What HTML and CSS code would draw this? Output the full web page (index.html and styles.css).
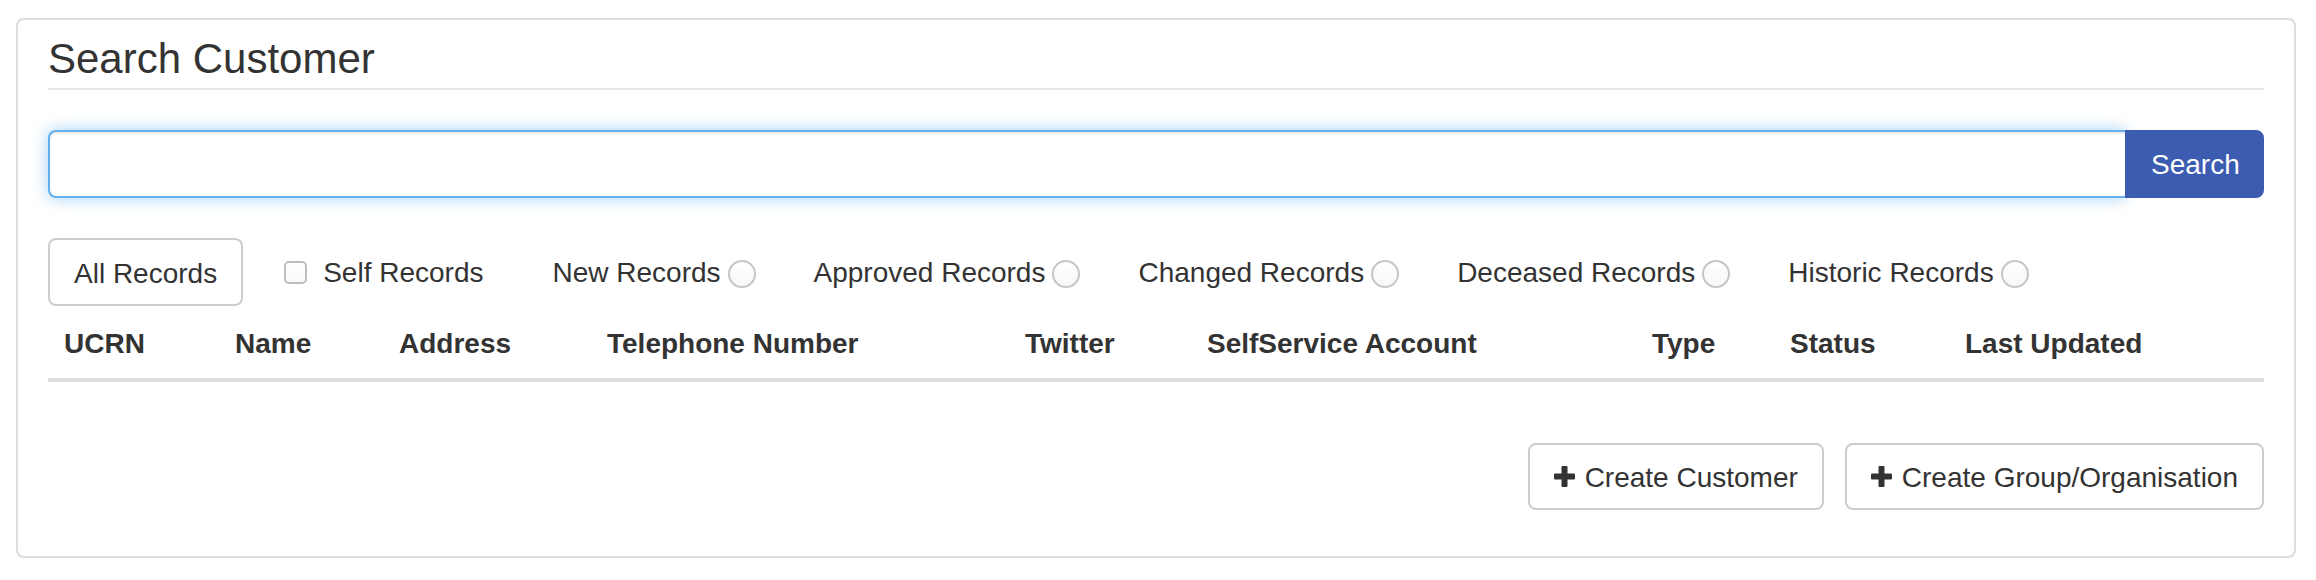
FILE: index.html
```html
<!DOCTYPE html>
<html lang="en">
<head>
<meta charset="utf-8">
<title>Search Customer</title>
<link rel="stylesheet" href="styles.css">
</head>
<body>
<div class="page">
  <section class="panel">
    <h3 class="title">Search Customer</h3>

    <form class="search-row" onsubmit="return false;">
      <input class="search-input" type="text" aria-label="Search">
      <button class="search-btn" type="submit">Search</button>
    </form>

    <div class="filters">
      <button class="btn" type="button">All Records</button>
      <label class="check-item">
        <input class="check" type="checkbox">
        <span class="check-label">Self Records</span>
      </label>
      <label class="radio-item radio-first">
        <span class="lbl">New Records</span>
        <input class="radio" type="radio" name="rec">
      </label>
      <label class="radio-item">
        <span class="lbl">Approved Records</span>
        <input class="radio" type="radio" name="rec">
      </label>
      <label class="radio-item">
        <span class="lbl">Changed Records</span>
        <input class="radio" type="radio" name="rec">
      </label>
      <label class="radio-item">
        <span class="lbl">Deceased Records</span>
        <input class="radio" type="radio" name="rec">
      </label>
      <label class="radio-item">
        <span class="lbl">Historic Records</span>
        <input class="radio" type="radio" name="rec">
      </label>
    </div>

    <div class="table-head">
      <div class="th">UCRN</div>
      <div class="th">Name</div>
      <div class="th">Address</div>
      <div class="th">Telephone Number</div>
      <div class="th">Twitter</div>
      <div class="th">SelfService Account</div>
      <div class="th">Type</div>
      <div class="th">Status</div>
      <div class="th">Last Updated</div>
    </div>

    <div class="actions">
      <button class="btn btn-icon" type="button">
        <svg class="plus" viewBox="0 0 21 21" width="21" height="21" aria-hidden="true"><rect x="0" y="7.5" width="21" height="6" rx="1"/><rect x="7.5" y="0" width="6" height="21" rx="1"/></svg><span class="lbl">Create Customer</span>
      </button>
      <button class="btn btn-icon" type="button">
        <svg class="plus" viewBox="0 0 21 21" width="21" height="21" aria-hidden="true"><rect x="0" y="7.5" width="21" height="6" rx="1"/><rect x="7.5" y="0" width="6" height="21" rx="1"/></svg><span class="lbl">Create Group/Organisation</span>
      </button>
    </div>
  </section>
</div>
</body>
</html>
```

FILE: styles.css
```css
* {
  box-sizing: border-box;
}

html, body {
  margin: 0;
  padding: 0;
  background: #fff;
}

body {
  font-family: "Liberation Sans", Arial, Helvetica, sans-serif;
  font-size: 28px;
  line-height: 40px;
  color: #333;
}

.page {
  padding: 18px 20px 0 16px;
}

.panel {
  border: 2px solid #ddd;
  border-radius: 8px;
  padding: 16px 30px 46px 30px;
  background: #fff;
}

.title {
  margin: 0;
  font-size: 42px;
  line-height: 46px;
  font-weight: 400;
  color: #333;
  padding-bottom: 6px;
  border-bottom: 2px solid #e6e6e6;
}

.search-row {
  margin: 40px 0 0 0;
  display: flex;
  height: 68px;
}

.search-input {
  flex: 1;
  height: 68px;
  margin: 0;
  border: 2px solid #66afe9;
  border-right: 0;
  border-radius: 8px 0 0 8px;
  box-shadow: inset 0 2px 2px rgba(0, 0, 0, 0.075), 0 0 16px rgba(102, 175, 233, 0.6);
  outline: none;
  font: inherit;
  padding: 0 24px;
  color: #555;
}

.search-btn {
  width: 139px;
  height: 68px;
  margin: 0;
  border: 2px solid #3b5cb0;
  border-radius: 0 8px 8px 0;
  background: #3b5cb0;
  color: #fff;
  font: inherit;
  padding: 2px 24px 0 24px;
  text-align: left;
}

.filters {
  margin-top: 40px;
  display: flex;
  align-items: center;
  height: 68px;
}

.btn {
  height: 68px;
  margin: 0;
  padding: 3px 24px 0 24px;
  border: 2px solid #ccc;
  border-radius: 8px;
  background: #fff;
  color: #333;
  font: inherit;
  line-height: 40px;
  white-space: nowrap;
}

.lbl,
.check-label {
  padding-top: 2px;
}

.check-item {
  display: flex;
  align-items: center;
  margin-left: 41px;
}

.check {
  appearance: none;
  -webkit-appearance: none;
  width: 23px;
  height: 23px;
  margin: 0;
  border: 2px solid #bdbdbd;
  border-radius: 5px;
  background: linear-gradient(#fff, #fafafa);
}

.check-label {
  margin-left: 16px;
}

.radio-item {
  display: flex;
  align-items: center;
  margin-left: 58px;
}

.radio-first {
  margin-left: 69px;
}

.radio {
  appearance: none;
  -webkit-appearance: none;
  width: 28px;
  height: 28px;
  margin: 3px 0 0 7px;
  border: 2px solid #c6c6c6;
  border-radius: 50%;
  background: linear-gradient(#fff, #f7f7f7);
}

.table-head {
  display: grid;
  grid-template-columns: 171px 164px 208px 418px 182px 445px 138px 175px 315px;
  border-bottom: 4px solid #ddd;
}

.th {
  padding: 18px 16px 14px 16px;
  font-weight: 700;
  white-space: nowrap;
}

.actions {
  margin-top: 61px;
  display: flex;
  justify-content: flex-end;
  gap: 21px;
}

.btn-icon {
  display: flex;
  align-items: center;
  height: 67px;
  padding-top: 0;
}

.plus {
  fill: #333;
  margin-right: 10px;
  flex: none;
}
```
